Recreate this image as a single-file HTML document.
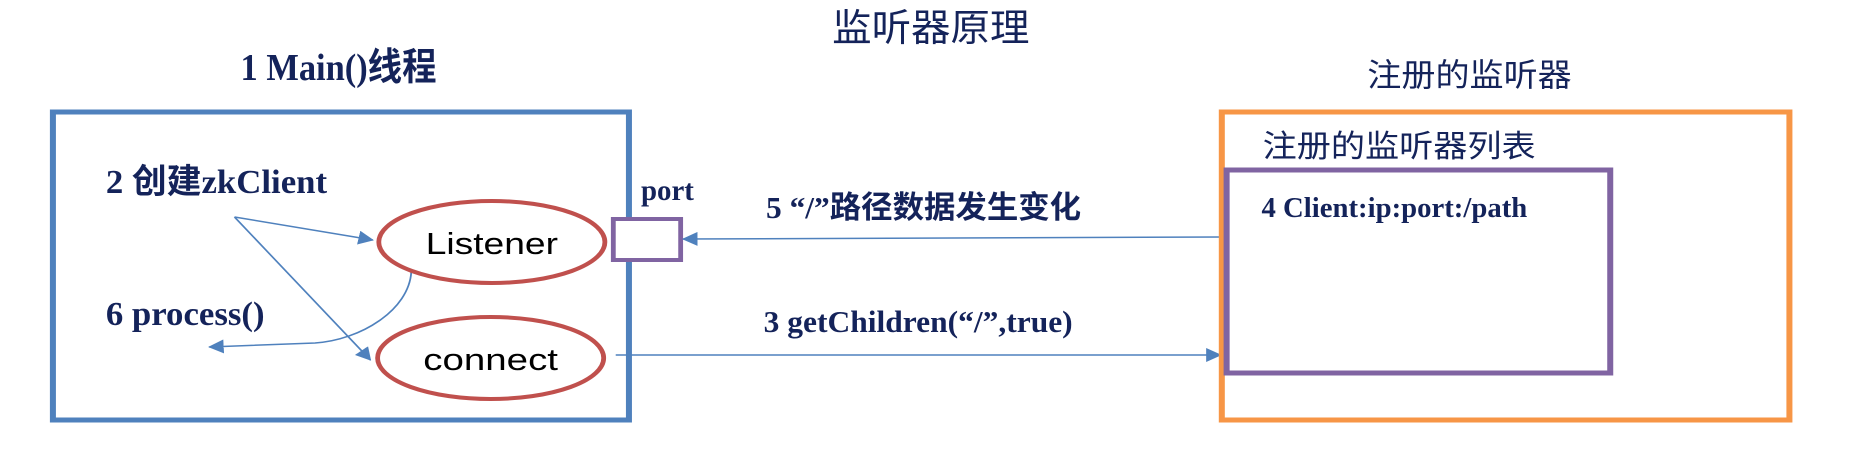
<!DOCTYPE html>
<html><head><meta charset="utf-8"><style>
html,body{margin:0;padding:0;background:#fff;}
svg{display:block;}
.t{font-family:"Liberation Serif","Noto Sans CJK SC",serif;font-weight:bold;fill:#14235a;}
.c{font-family:"Liberation Sans","Noto Sans CJK SC",sans-serif;fill:#14235a;}
.s{font-family:"Liberation Sans",sans-serif;fill:#000;}
</style></head><body>
<svg width="1876" height="458" viewBox="0 0 1560 458" preserveAspectRatio="none" xmlns="http://www.w3.org/2000/svg">
<defs>
<marker id="a" markerWidth="13" markerHeight="14" refX="12" refY="7" orient="auto" markerUnits="userSpaceOnUse"><path d="M0,0 L13,7 L0,14 z" fill="#4f81bd"/></marker>
</defs>
<text class="c" x="692" y="41" font-size="38" textLength="164" lengthAdjust="spacingAndGlyphs">监听器原理</text>
<text class="t" x="200" y="80" font-size="38" textLength="163" lengthAdjust="spacingAndGlyphs">1 Main()线程</text>
<rect x="44" y="112" width="479" height="308" fill="none" stroke="#4f81bd" stroke-width="5"/>
<text class="t" x="88" y="193" font-size="34" textLength="184" lengthAdjust="spacingAndGlyphs">2 创建zkClient</text>
<text class="t" x="88" y="325" font-size="34" textLength="132" lengthAdjust="spacingAndGlyphs">6 process()</text>
<line x1="195" y1="217" x2="310" y2="240" stroke="#4f81bd" stroke-width="1.5" marker-end="url(#a)"/>
<line x1="195" y1="217" x2="308" y2="360" stroke="#4f81bd" stroke-width="1.5" marker-end="url(#a)"/>
<path d="M342,272 C340,310 300,340 262,343 L174,347" fill="none" stroke="#4f81bd" stroke-width="1.5" marker-end="url(#a)"/>
<ellipse cx="409" cy="242" rx="94" ry="41" fill="#fff" stroke="#c0504d" stroke-width="4"/>
<ellipse cx="408" cy="358" rx="94" ry="41" fill="#fff" stroke="#c0504d" stroke-width="4"/>
<text class="s" x="409" y="254" font-size="31" text-anchor="middle" textLength="110" lengthAdjust="spacingAndGlyphs">Listener</text>
<text class="s" x="408" y="370" font-size="31" text-anchor="middle" textLength="112" lengthAdjust="spacingAndGlyphs">connect</text>
<rect x="510" y="219" width="56" height="41" fill="#fff" stroke="#8064a2" stroke-width="4"/>
<text class="t" x="533" y="200" font-size="30" textLength="44" lengthAdjust="spacingAndGlyphs">port</text>
<line x1="1017" y1="237" x2="568" y2="239" stroke="#4f81bd" stroke-width="1.5" marker-end="url(#a)"/>
<line x1="512" y1="355" x2="1015" y2="355" stroke="#4f81bd" stroke-width="1.5" marker-end="url(#a)"/>
<text class="t" x="637" y="218" font-size="31" textLength="262" lengthAdjust="spacingAndGlyphs">5 “/”路径数据发生变化</text>
<text class="t" x="635" y="332" font-size="31" textLength="257" lengthAdjust="spacingAndGlyphs">3 getChildren(“/”,true)</text>
<text class="c" x="1137" y="86" font-size="32" textLength="170" lengthAdjust="spacingAndGlyphs">注册的监听器</text>
<rect x="1016" y="112" width="472" height="308" fill="none" stroke="#f79646" stroke-width="5"/>
<text class="c" x="1050" y="157" font-size="31" textLength="227" lengthAdjust="spacingAndGlyphs">注册的监听器列表</text>
<rect x="1020" y="170" width="319" height="203" fill="none" stroke="#8064a2" stroke-width="5"/>
<text class="t" x="1049" y="217" font-size="29" textLength="221" lengthAdjust="spacingAndGlyphs">4 Client:ip:port:/path</text>
</svg>
</body></html>
